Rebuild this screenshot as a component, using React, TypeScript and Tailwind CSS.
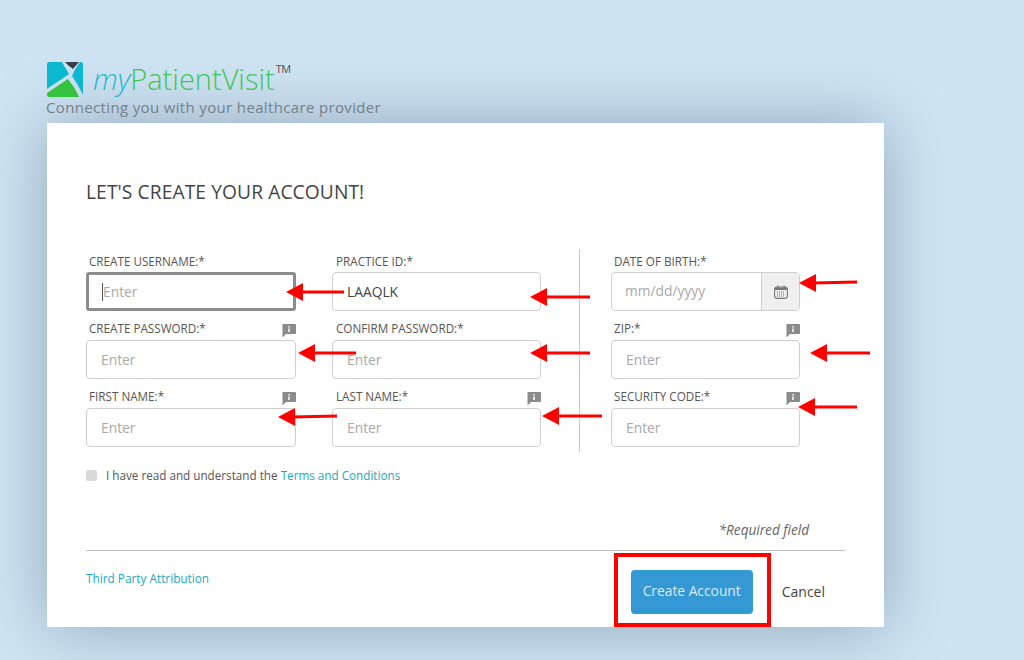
const font = { fontFamily: '"Open Sans", sans-serif' }

const arrows = [
  [286, 292, 344, 292],
  [530, 297, 590, 297],
  [799, 283, 857, 282],
  [298, 353, 356, 353],
  [530, 353, 590, 353],
  [810, 353, 870, 353],
  [278, 417, 337, 416],
  [542, 416, 602, 416],
  [798, 407, 857, 407],
]

function Logo() {
  return (
    <svg width="36" height="35" viewBox="0 0 36 35">
      <path d="M2 0H15C17 4 20 8 22 12C17 16 8 21 0 27V2C0 1 1 0 2 0Z" fill="#0bb8d0" />
      <path d="M33 0H34C35 0 36 1 36 2V33C33 26 29 20 25 14C27 9 30 4 33 0Z" fill="#0bb8d0" />
      <path d="M18 0H32C30 2 28 5 26 7C24 5 20 3 18 0Z" fill="#3c3d49" />
      <path d="M2 35C1 35 0 34 0 33V31C7 26 14 22 21 17C25 22 29 28 32 35Z" fill="#35c23f" />
    </svg>
  )
}

function InfoIcon() {
  return (
    <svg width="14" height="13" viewBox="0 0 14 13">
      <path d="M1 0H13C13.600 0 14 .4 14 1V9C14 9.600 13.600 10 13 10H4L1 13H.5V1C.5 .4 .5 0 1 0Z" fill="#8b8b8b" />
      <rect x="6.300" y="2" width="1.500" height="1.500" fill="#fff" />
      <rect x="6.300" y="4.500" width="1.500" height="3.500" fill="#fff" />
    </svg>
  )
}

function CalendarIcon() {
  return (
    <svg width="14" height="14" viewBox="0 0 14 14">
      <rect x=".6" y="2" width="12.800" height="11.400" rx="2.500" fill="none" stroke="#777" strokeWidth="1.100" />
      <rect x="1" y="2.500" width="12" height="2.500" fill="#777" />
      <rect x="3.200" y=".5" width="1.200" height="2.500" fill="#777" />
      <rect x="9.600" y=".5" width="1.200" height="2.500" fill="#777" />
      <path d="M3 7H11M3 9H11M3 11H11" stroke="#777" strokeWidth="1" strokeDasharray="1 1" />
    </svg>
  )
}

function Field({ label, info, value, labelClass, focused }: { label: string; info?: boolean; value?: string; labelClass: string; focused?: boolean }) {
  return (
    <div className="flex flex-col">
      <div className={`flex justify-between items-end h-[21px] ${labelClass}`}>
        <span className="text-[11.7px] leading-[16px] mb-[1px] text-[#555]">{label}</span>
        {info && <InfoIcon />}
      </div>
      {focused ? (
        <div className="h-[39px] rounded-[3px] border-[3px] border-[#8c8c8c] flex items-center pl-[13px] text-[13.8px] text-[#a9a9a9]">
          <span className="border-l border-[#555] leading-[18px]">Enter</span>
        </div>
      ) : (
        <div className={`h-[39px] pt-[1px] rounded-[4px] border border-[#cfcfcf] flex items-center pl-[14px] text-[13.8px] ${value ? "text-[#444]" : "text-[#a9a9a9]"}`}>
          {value || "Enter"}
        </div>
      )}
    </div>
  )
}

export default function App() {
  return (
    <div className="relative w-[1024px] h-[660px] overflow-hidden bg-[#cfe4f3] pl-[47px] pt-[62px]" style={font}>
      <div className="flex items-start h-[35px]">
        <Logo />
        <div className="ml-[10px] text-[29px] leading-[34px] font-light text-[#3fc65a]">
          <span className="italic text-[#1fb9d2]">my</span>PatientVisit
        </div>
        <span className="text-[11px] leading-[12px] ml-[1px] mt-[1px] tracking-[-0.5px] text-[#555]">TM</span>
      </div>
      <div className="-ml-[1px] text-[15px] leading-[20px] text-[#77808a] tracking-[0.35px]">Connecting you with your healthcare provider</div>
      <div className="w-[837px] h-[504px] mt-[6px] bg-white shadow-[0_0_60px_rgba(70,95,120,0.45)] px-[39px] flex flex-col">
        <h1 className="mt-[57px] text-[19.2px] leading-[24px] text-[#444] tracking-[0.1px]">LET'S CREATE YOUR ACCOUNT!</h1>
        <div className="flex mt-[45px] h-[203px]">
          <div className="grid grid-cols-[210px_209px] gap-x-[36px] gap-y-[8px] h-fit pt-[2px]">
            <Field label="CREATE USERNAME:*" labelClass="pb-[2px] pl-[3px]" focused />
            <Field label="PRACTICE ID:*" labelClass="pb-[2px] pl-[4px]" value="LAAQLK" />
            <Field label="CREATE PASSWORD:*" labelClass="pb-[3px] pl-[3px]" info />
            <Field label="CONFIRM PASSWORD:*" labelClass="pb-[3px] pl-[4px]" />
            <Field label="FIRST NAME:*" labelClass="pb-[3px] pl-[3px]" info />
            <Field label="LAST NAME:*" labelClass="pb-[3px] pl-[4px]" info />
          </div>
          <div className="w-px bg-[#c9c9c9] ml-[38px] mr-[31px]" />
          <div className="flex flex-col gap-y-[8px] w-[189px] pt-[2px]">
            <div className="flex flex-col">
              <div className="h-[21px] pb-[3px] pl-[3px] flex items-end text-[11.7px] leading-[16px] text-[#555]">DATE OF BIRTH:*</div>
              <div className="h-[39px] rounded-[4px] border border-[#cfcfcf] flex items-center overflow-hidden text-[13.8px] text-[#a9a9a9]">
                <span className="flex-1 pl-[13px]">mm/dd/yyyy</span>
                <span className="w-[38px] h-full bg-[#efefef] border-l border-[#cfcfcf] flex items-center justify-center">
                  <CalendarIcon />
                </span>
              </div>
            </div>
            <Field label="ZIP:*" labelClass="pb-[3px] pl-[3px]" info />
            <Field label="SECURITY CODE:*" labelClass="pb-[3px] pl-[3px]" info />
          </div>
        </div>
        <div className="flex items-center mt-[15px] text-[11.7px] text-[#555]">
          <span className="w-[11px] h-[11px] rounded-[2px] bg-[#d9d9d9] mr-[9px]" />
          I have read and understand the&nbsp;<span className="text-[#1aa9bd]">Terms and Conditions</span>
        </div>
        <div className="text-right mt-[37px] pr-[36px] text-[13.6px] leading-[16px] italic text-[#666]">*Required field</div>
        <div className="h-px bg-[#bdbdbd] mt-[12px] w-[759px]" />
        <div className="flex justify-between w-[759px]">
          <span className="mt-[19px] text-[11.8px] leading-[16px] text-[#1aa9bd]">Third Party Attribution</span>
          <div className="flex items-center mt-[19px] h-[44px]">
            <button className="w-[122px] h-[44px] rounded-[4px] bg-[#3498d4] text-[13.8px] text-[#d8ecf8]">Create Account</button>
            <span className="ml-[29px] mr-[20px] text-[14px] text-[#444]">Cancel</span>
          </div>
        </div>
      </div>
      <div className="absolute left-[614px] top-[553px] w-[157px] h-[74px] border-[4px] border-[#f00]" />
      <svg className="absolute left-0 top-0" width="1024" height="660">
        {arrows.map(([x1, y1, x2, y2], i) => (
          <g key={i} fill="#f00" stroke="#f00">
            <line x1={x1 + 14} y1={y1} x2={x2} y2={y2} strokeWidth="3" />
            <polygon points={`${x1},${y1} ${x1 + 17},${y1 - 9} ${x1 + 17},${y1 + 9}`} strokeWidth="0" />
          </g>
        ))}
      </svg>
    </div>
  )
}
